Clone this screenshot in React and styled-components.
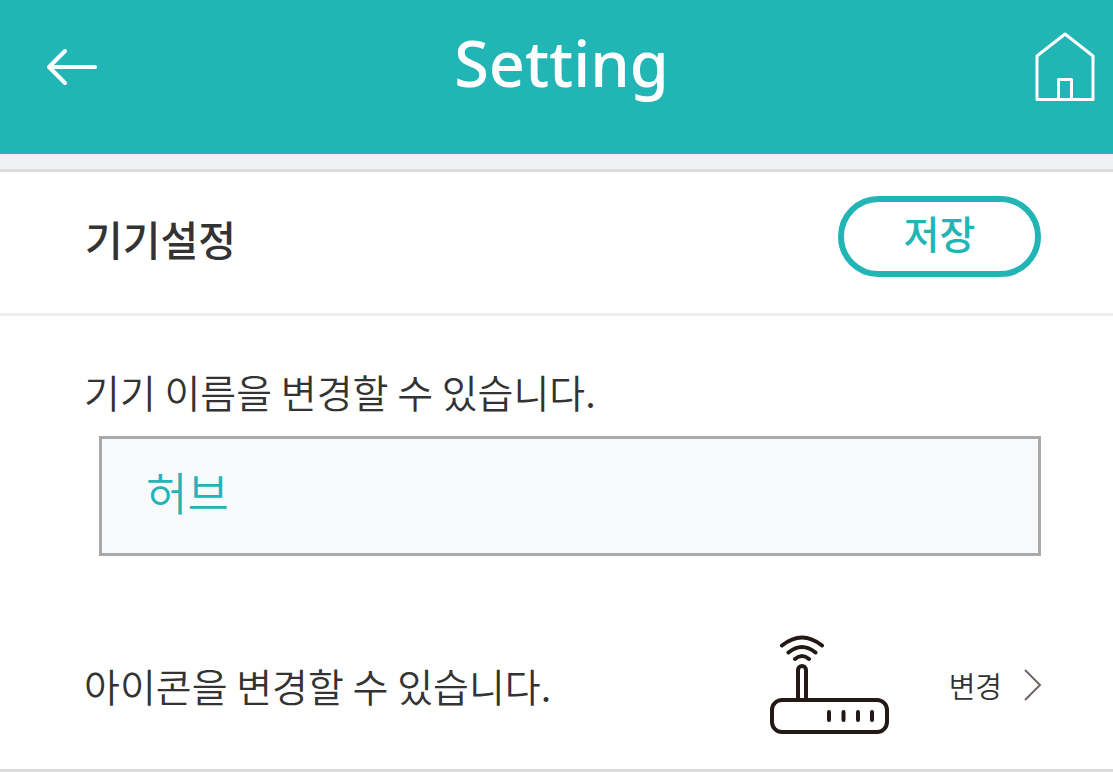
import React, { useState } from "react";
import styled, { createGlobalStyle } from "styled-components";

const teal = "#22b5b6";

const GlobalStyle = createGlobalStyle`
  *, *::before, *::after { box-sizing: border-box; }
  body {
    margin: 0;
    background: #fff;
    color: #333;
    font-family: "Noto Sans CJK KR", "Noto Sans", sans-serif;
  }
  button, input { font-family: inherit; }
`;

const Header = styled.header`
  display: grid;
  grid-template-columns: 52px 1fr 60px;
  align-items: center;
  padding: 0 18px 20px 46px;
  height: 154px;
  background: ${teal};
  color: #fff;
`;

const PageTitle = styled.h1`
  margin: 0;
  padding: 0 10px 8px 0;
  text-align: center;
  font: 500 63px/80px "Noto Sans", sans-serif;
`;

const IconButton = styled.button`
  display: flex;
  justify-content: center;
  padding: 0;
  border: 0;
  background: none;
  color: inherit;
  cursor: pointer;
`;

const Divider = styled.div`
  height: 18px;
  background: #eef2f5;
  border-bottom: 3px solid #dcdcdc;
`;

const SectionHead = styled.div`
  display: flex;
  align-items: center;
  justify-content: space-between;
  padding: 24px 72px 36px 85px;
  border-bottom: 3px solid #ededed;
`;

const SectionTitle = styled.h2`
  margin: 0;
  padding-top: 2px;
  font-size: 41px;
  font-weight: 500;
  line-height: 60px;
`;

const SaveButton = styled.button`
  width: 203px;
  height: 81px;
  padding: 0 0 10px;
  border: 6px solid ${teal};
  border-radius: 41px;
  background: #fff;
  color: ${teal};
  font-size: 39px;
  font-weight: 500;
  line-height: 60px;
  cursor: pointer;
`;

const Field = styled.div`
  padding: 45px 72px 0 84px;
`;

const Description = styled.label`
  display: block;
  font-size: 39px;
  font-weight: 350;
  line-height: 60px;
`;

const NameInput = styled.input`
  display: block;
  width: calc(100% - 15px);
  height: 120px;
  margin: 15px 0 0 15px;
  padding: 0 44px 10px;
  border: 3px solid #a9a9a9;
  border-radius: 0;
  outline: none;
  background: #f8f9fb;
  color: ${teal};
  font-size: 45px;
  font-weight: 350;
`;

const IconRow = styled.div`
  display: flex;
  align-items: center;
  height: 216px;
  padding: 45px 71px 0 84px;
  border-bottom: 3px solid #dcdcdc;
`;

const RouterIcon = styled.svg`
  flex: none;
  margin-left: auto;
`;

const ChangeButton = styled.button`
  display: flex;
  align-items: center;
  gap: 22px;
  margin-left: 59px;
  padding: 0;
  border: 0;
  background: none;
  color: #333;
  font-size: 29px;
  font-weight: 350;
  line-height: 40px;
  cursor: pointer;
`;

export default function App() {
  const [name, setName] = useState("허브");
  return (
    <>
      <GlobalStyle />
      <Header>
        <IconButton type="button" aria-label="뒤로">
          <svg width="52" height="38" viewBox="0 0 52 38" fill="none" stroke="currentColor" strokeWidth="4" strokeLinecap="round">
            <path d="M19 3 3 19l16 16" strokeLinejoin="round" />
            <path d="M4 19h45" />
          </svg>
        </IconButton>
        <PageTitle>Setting</PageTitle>
        <IconButton type="button" aria-label="홈">
          <svg width="60" height="70" viewBox="0 0 60 70" fill="none" stroke="currentColor" strokeWidth="3" strokeLinejoin="round">
            <path d="M2 67.500V24L30 2l28 22v43.500z" />
            <path d="M23.500 67V47.500h13V67" />
          </svg>
        </IconButton>
      </Header>
      <Divider />
      <main>
        <SectionHead>
          <SectionTitle>기기설정</SectionTitle>
          <SaveButton type="button">저장</SaveButton>
        </SectionHead>
        <Field>
          <Description htmlFor="device-name">기기 이름을 변경할 수 있습니다.</Description>
          <NameInput id="device-name" value={name} onChange={(e) => setName(e.target.value)} />
        </Field>
        <IconRow>
          <Description as="span" id="icon-label">아이콘을 변경할 수 있습니다.</Description>
          <RouterIcon width="120" height="100" viewBox="0 0 120 100" fill="none" stroke="#231815" strokeWidth="4" strokeLinecap="round" aria-hidden="true">
            <rect x="2" y="65" width="115" height="32" rx="10" />
            <path d="M28 65V35a4 4 0 0 1 8 0v30" />
            <path d="M12 10.500q20-16 40 0M18.500 17.500q13.500-11 27 0M25 24q7-6 14 0" />
            <path d="M59 77v8M73.500 77v8M88 77v8M102 77v8" />
          </RouterIcon>
          <ChangeButton type="button" aria-describedby="icon-label">
            변경
            <svg width="18" height="32" viewBox="0 0 18 32" fill="none" stroke="#6f6664" strokeWidth="2" aria-hidden="true">
              <path d="m1 1 15 15L1 31" />
            </svg>
          </ChangeButton>
        </IconRow>
      </main>
    </>
  );
}
